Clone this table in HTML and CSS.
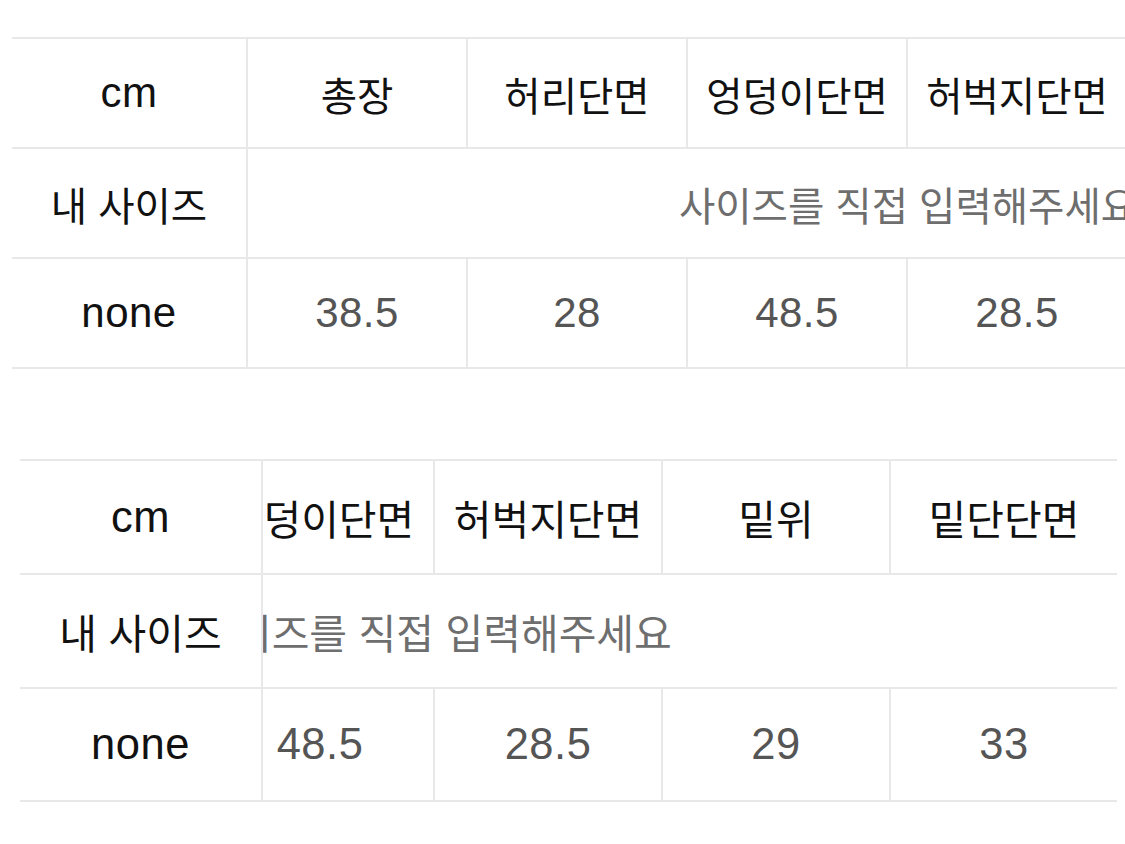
FILE: index.html
```html
<!DOCTYPE html>
<html lang="ko">
<head>
<meta charset="utf-8">
<link rel="stylesheet" href="styles.css">
</head>
<body>
<div class="wrap wrap1">
  <table class="size t1">
    <colgroup><col class="c0"><col class="cd"><col class="cd"><col class="cd"><col class="cd"><col class="cd"><col class="cl"></colgroup>
    <tr class="r1">
      <td class="first lat blk">cm</td>
      <td class="ko">총장</td>
      <td class="ko">허리단면</td>
      <td class="ko">엉덩이단면</td>
      <td class="ko">허벅지단면</td>
      <td class="ko">밑위</td>
      <td class="ko last">밑단단면</td>
    </tr>
    <tr class="r2">
      <td class="first ko">내 사이즈</td>
      <td class="ko ph last" colspan="6">사이즈를 직접 입력해주세요</td>
    </tr>
    <tr class="r3">
      <td class="first lat blk">none</td>
      <td class="lat val">38.5</td>
      <td class="lat val">28</td>
      <td class="lat val">48.5</td>
      <td class="lat val">28.5</td>
      <td class="lat val">29</td>
      <td class="lat val last">33</td>
    </tr>
  </table>
</div>
<div class="wrap wrap2">
  <table class="size t2">
    <colgroup><col class="c0"><col class="cd"><col class="cd"><col class="cd"><col class="cd"><col class="cd"><col class="cl"></colgroup>
    <tr class="r1">
      <td class="first lat blk">cm</td>
      <td class="ko">총장</td>
      <td class="ko">허리단면</td>
      <td class="ko">엉덩이단면</td>
      <td class="ko">허벅지단면</td>
      <td class="ko">밑위</td>
      <td class="ko last">밑단단면</td>
    </tr>
    <tr class="r2">
      <td class="first ko">내 사이즈</td>
      <td class="ko ph last" colspan="6">사이즈를 직접 입력해주세요</td>
    </tr>
    <tr class="r3">
      <td class="first lat blk">none</td>
      <td class="lat val">38.5</td>
      <td class="lat val">28</td>
      <td class="lat val">48.5</td>
      <td class="lat val">28.5</td>
      <td class="lat val">29</td>
      <td class="lat val last">33</td>
    </tr>
  </table>
</div>
<script src="script.js"></script>
</body>
</html>
```
FILE: styles.css
```css
html, body {
  margin: 0;
  padding: 0;
  background: #ffffff;
  overflow: hidden;
}
body {
  width: 1125px;
  height: 844px;
  font-family: "Liberation Sans", "Noto Sans CJK KR", sans-serif;
  color: #111111;
}
.wrap {
  overflow-x: auto;
  scrollbar-width: none;
}
.wrap::-webkit-scrollbar { display: none; }
.wrap1 {
  margin: 37px -60px 0 12px;
}
.wrap2 {
  margin: 90px 8px 0 20px;
}
.size {
  border-collapse: separate;
  border-spacing: 0;
  table-layout: fixed;
}
.size td {
  padding: 0;
  text-align: center;
  vertical-align: middle;
  white-space: nowrap;
  border-bottom: 2px solid #e8e8e8;
  border-right: 2px solid #e8e8e8;
  background: #ffffff;
}
.size tr.r1 td { border-top: 2px solid #e8e8e8; }
.size td.last { border-right: none; }
.size td.first {
  position: sticky;
  left: 0;
  z-index: 1;
}
.ko {
  font-family: "Noto Sans CJK KR", sans-serif;
}
.lat { letter-spacing: 0.5px; }
.blk { color: #111111; }
.val { color: #555555; }
.ph { color: #6e6e6e; }

.t1 { width: 1556px; }
.t1 .c0 { width: 236px; }
.t1 .cd { width: 220px; }
.t1 .cl { width: 220px; }
.t1 tr.r1 { height: 112px; }
.t1 tr.r2, .t1 tr.r3 { height: 110px; }
.t1 .ko { font-size: 39.5px; }
.t1 .lat { font-size: 42px; }

.t2 { width: 1609px; }
.t2 .c0 { width: 243px; }
.t2 .cd { width: 228px; }
.t2 .cl { width: 226px; }
.t2 tr.r1 { height: 116px; }
.t2 tr.r2 { height: 114px; }
.t2 tr.r3 { height: 113px; }
.t2 .ko { font-size: 41px; }
.t2 .lat { font-size: 43.5px; }
```
FILE: script.js
```js
document.querySelector('.wrap2').scrollLeft = 10000;
```
